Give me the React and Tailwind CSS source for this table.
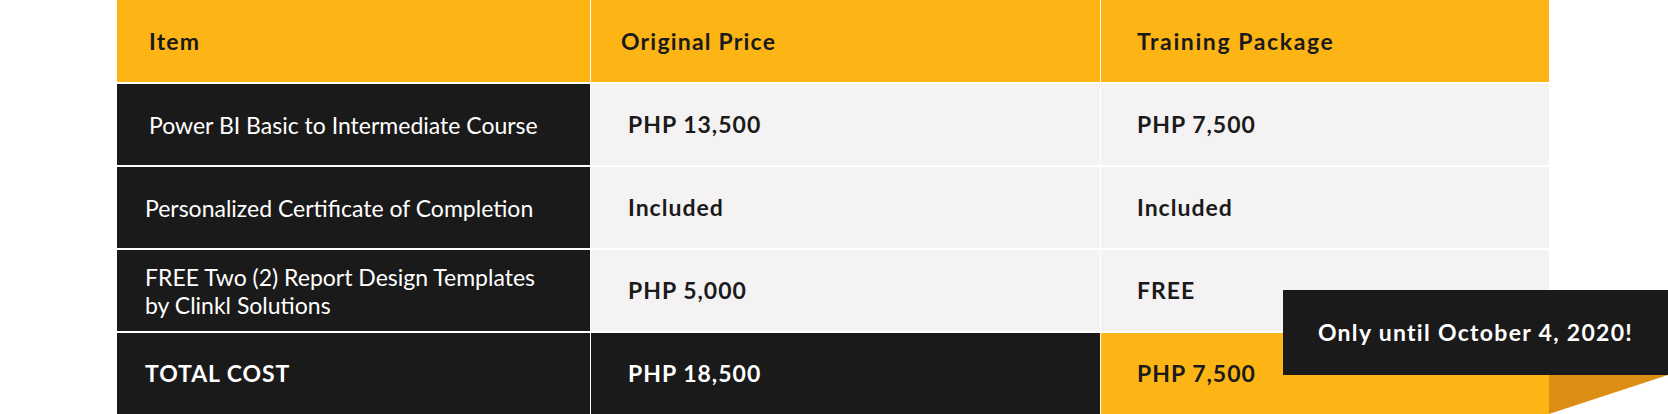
const rows = [
    { item: ['Power BI Basic to Intermediate Course'], pad: 'pl-[32px]', original: 'PHP 13,500', pkg: 'PHP 7,500' },
    { item: ['Personalized Certificate of Completion'], pad: 'pl-[28px]', original: 'Included', pkg: 'Included' },
    { item: ['FREE Two (2) Report Design Templates', 'by Clinkl Solutions'], pad: 'pl-[28px]', original: 'PHP 5,000', pkg: 'FREE' },
];

const font = { fontFamily: 'Lato, "Open Sans", sans-serif' };

export default function App() {
    return (
        <div className="relative w-[1668px] h-[414px] bg-white overflow-hidden" style={font}>
            <div className="ml-[117px] w-[1432px] grid grid-cols-[473px_509px_448px] grid-rows-[82px_81px_81px_81px_81px] gap-x-px gap-y-[2px] text-[23px]">
                {/* header */}
                <div className="bg-[#fdb515] flex items-center pl-[32px] font-bold tracking-[1.2px] text-[#1b1a1a]">Item</div>
                <div className="bg-[#fdb515] flex items-center pl-[30px] font-bold tracking-[1.2px] text-[#1b1a1a]">Original Price</div>
                <div className="bg-[#fdb515] flex items-center pl-[36px] font-bold tracking-[1.6px] text-[#1b1a1a]">Training Package</div>

                {rows.map((r, i) => (
                    <div key={i} className="contents">
                        <div className={`bg-[#1b1a1a] flex flex-col justify-center ${r.pad} leading-[28px] text-white`}>
                            {r.item.map((line) => (
                                <span key={line}>{line}</span>
                            ))}
                        </div>
                        <div className="bg-[#f4f2f3] flex items-center pl-[37px] font-bold tracking-[1px] text-[#1b1a1a]">{r.original}</div>
                        <div className="bg-[#f4f2f3] flex items-center pl-[36px] font-bold tracking-[1px] text-[#1b1a1a]">{r.pkg}</div>
                    </div>
                ))}

                {/* total */}
                <div className="bg-[#1b1a1a] flex items-center pl-[28px] font-bold tracking-[0.9px] text-white">TOTAL COST</div>
                <div className="bg-[#1b1a1a] flex items-center pl-[37px] font-bold tracking-[1px] text-white">PHP 18,500</div>
                <div className="bg-[#fdb515] flex items-center pl-[36px] font-bold tracking-[1px] text-[#1b1a1a]">PHP 7,500</div>
            </div>

            {/* ribbon callout */}
            <svg className="absolute left-[1549px] top-[375px]" width="119" height="39" viewBox="0 0 119 39">
                <polygon points="0,0 119,0 0,39" fill="#dc8d13" />
            </svg>
            <div className="absolute left-[1283px] top-[290px] w-[385px] h-[85px] bg-[#1b1a1a] flex items-center justify-center text-white text-[23px] font-bold tracking-[1.3px]">
                Only until October 4, 2020!
            </div>
        </div>
    );
}
